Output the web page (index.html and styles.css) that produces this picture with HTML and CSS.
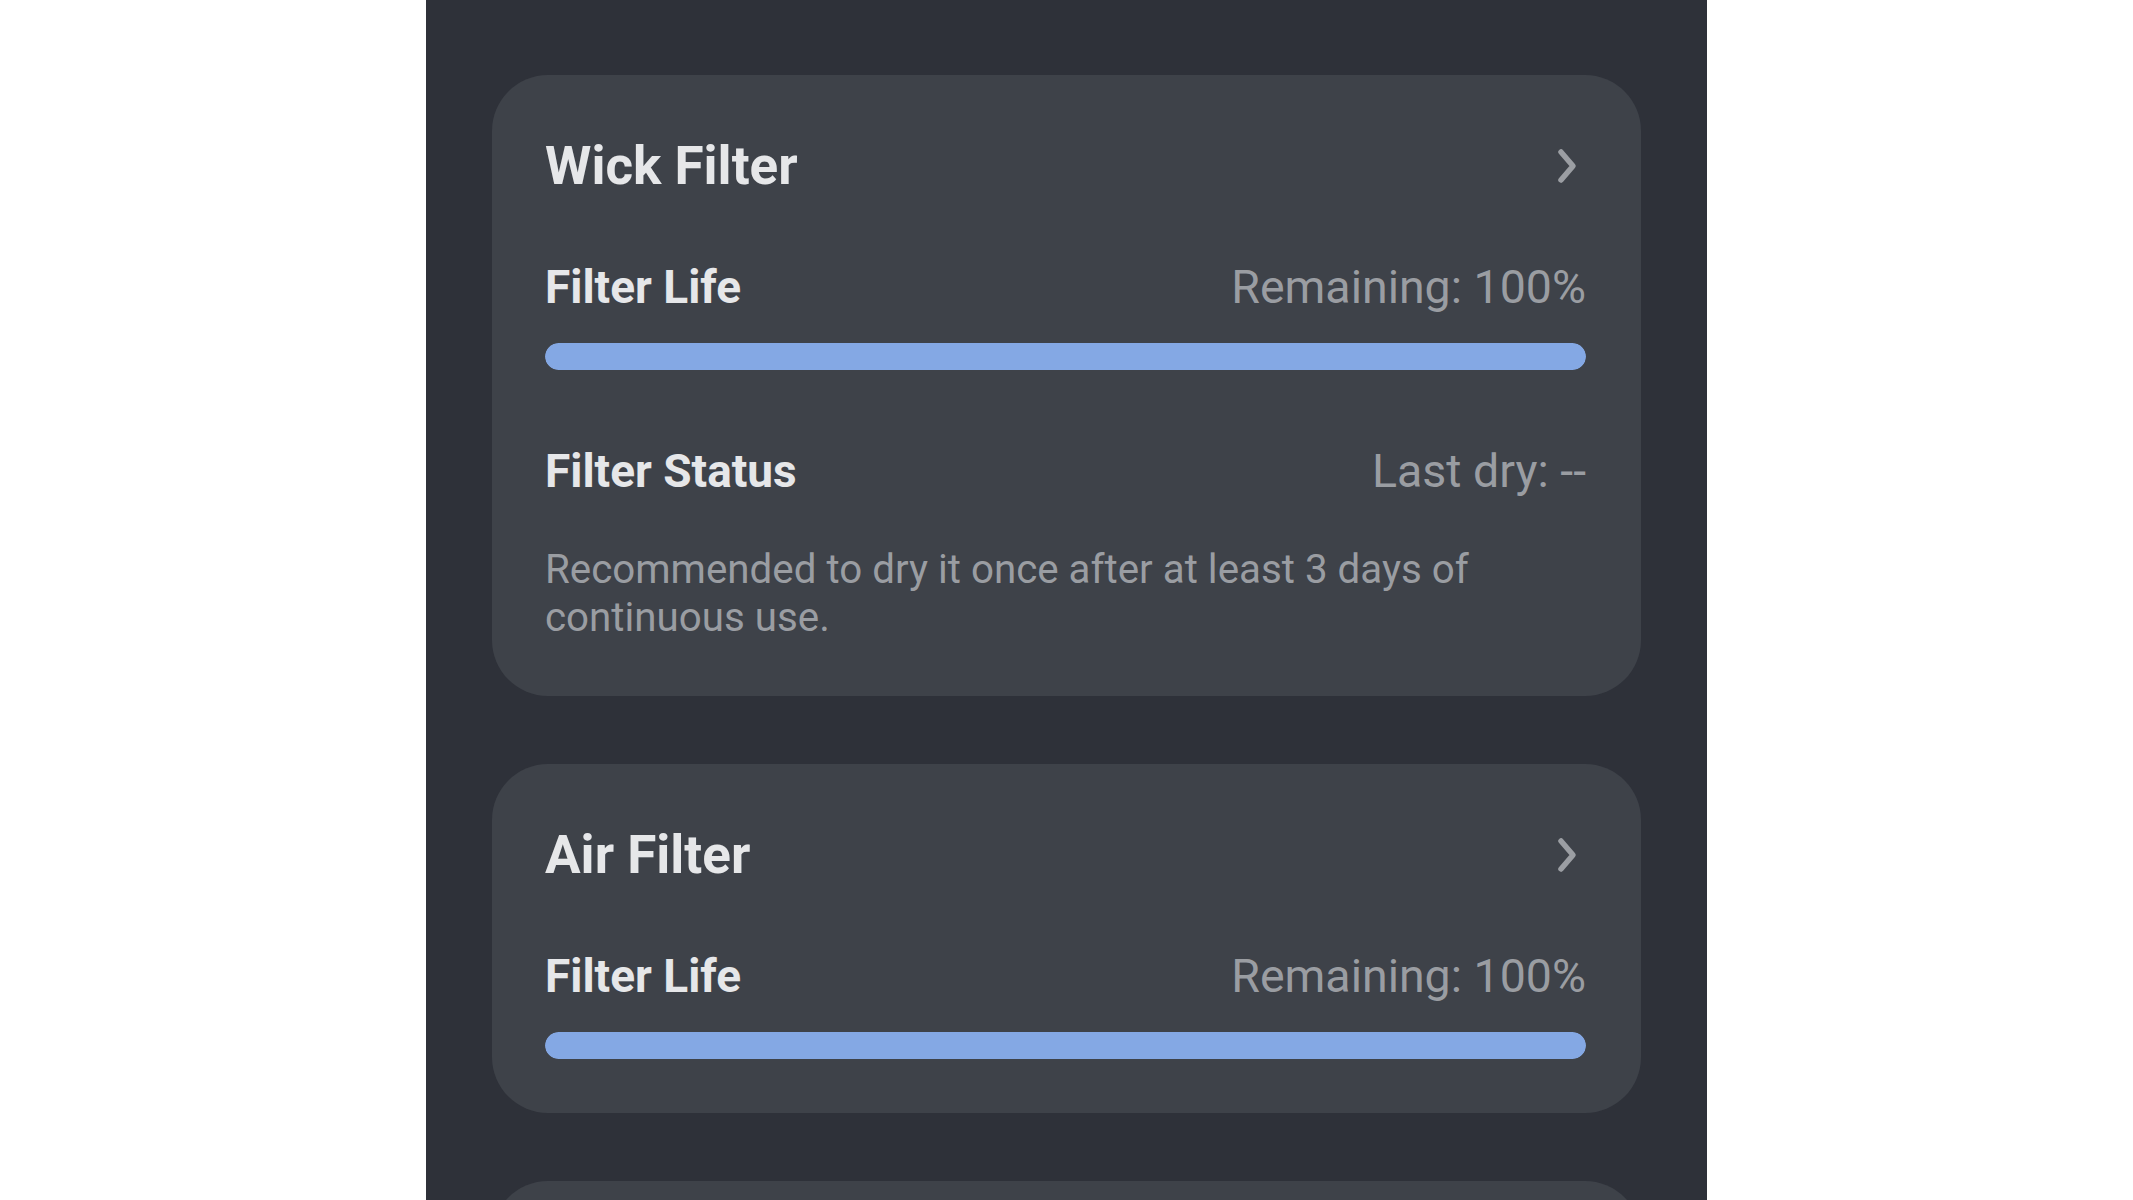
FILE: index.html
```html
<!DOCTYPE html>
<html lang="en">
<head>
<meta charset="utf-8">
<title>Filters</title>
<link rel="stylesheet" href="styles.css">
</head>
<body>
<div class="panel">
  <section class="card">
    <div class="card-head">
      <h2 class="title">Wick Filter</h2>
      <svg class="chev" viewBox="0 0 24 38" width="24" height="38" aria-hidden="true"><path d="M5 5 L17 19 L5 33" /></svg>
    </div>
    <div class="row row-life">
      <span class="label">Filter Life</span>
      <span class="value">Remaining: 100%</span>
    </div>
    <div class="bar"><div class="bar-fill" style="width:100%"></div></div>
    <div class="row row-status">
      <span class="label">Filter Status</span>
      <span class="value">Last dry: --</span>
    </div>
    <p class="note">Recommended to dry it once after at least 3 days of continuous use.</p>
  </section>
  <section class="card">
    <div class="card-head">
      <h2 class="title">Air Filter</h2>
      <svg class="chev" viewBox="0 0 24 38" width="24" height="38" aria-hidden="true"><path d="M5 5 L17 19 L5 33" /></svg>
    </div>
    <div class="row row-life">
      <span class="label">Filter Life</span>
      <span class="value">Remaining: 100%</span>
    </div>
    <div class="bar"><div class="bar-fill" style="width:100%"></div></div>
  </section>
  <section class="card card-stub"></section>
</div>
</body>
</html>
```
FILE: styles.css
```css
html, body {
  margin: 0;
  padding: 0;
  background: #ffffff;
  height: 100%;
}
body {
  font-family: Roboto, "Liberation Sans", sans-serif;
  display: flex;
  justify-content: center;
  overflow: hidden;
}
.panel {
  width: 1281px;
  height: 1200px;
  background: #2e3139;
  box-sizing: border-box;
  padding: 75px 66px 0;
  display: flex;
  flex-direction: column;
  gap: 68px;
  overflow: hidden;
}
.card {
  background: #3e4249;
  border-radius: 56px;
  padding: 59px 55px 54px 53px;
  display: flex;
  flex-direction: column;
  flex-shrink: 0;
}
.card-stub {
  height: 200px;
  padding: 0;
}
.card-head {
  display: flex;
  align-items: center;
  justify-content: space-between;
  height: 64px;
}
.title {
  margin: 0;
  font-size: 53px;
  font-weight: 700;
  color: #e6e7e9;
  line-height: 64px;
}
.chev {
  margin-right: 6px;
  fill: none;
  stroke: #9b9ea3;
  stroke-width: 5.5;
  stroke-linecap: round;
  stroke-linejoin: round;
}
.row {
  display: flex;
  justify-content: space-between;
  align-items: center;
  height: 56px;
}
.row-life {
  margin-top: 61px;
}
.row-status {
  margin-top: 73px;
}
.label {
  font-size: 46px;
  font-weight: 700;
  color: #e6e7e9;
  line-height: 56px;
}
.value {
  font-size: 46.5px;
  font-weight: 400;
  color: #9a9da2;
  line-height: 56px;
}
.bar {
  margin-top: 28px;
  height: 27px;
  border-radius: 13.5px;
  background: #4a4f58;
  overflow: hidden;
}
.bar-fill {
  height: 100%;
  border-radius: 13.5px;
  background: #84a8e4;
}
.note {
  margin: 47px 0 0;
  font-size: 40.3px;
  line-height: 48px;
  color: #9a9da2;
}
```
